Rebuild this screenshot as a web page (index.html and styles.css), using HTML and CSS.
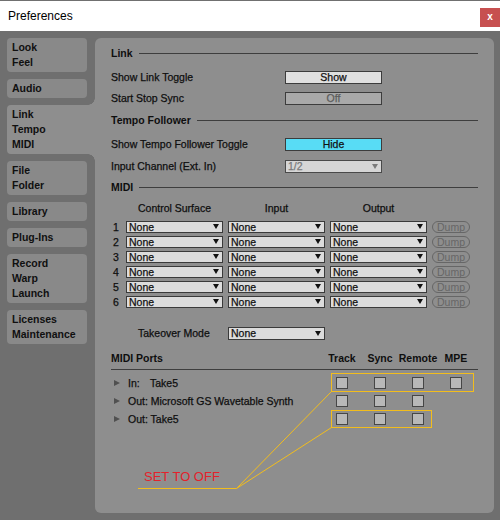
FILE: index.html
```html
<!DOCTYPE html>
<html>
<head>
<meta charset="utf-8">
<title>Preferences</title>
<link rel="stylesheet" href="styles.css">
</head>
<body>
<div class="window">
  <div class="titlebar">
    <span class="title">Preferences</span>
    <span class="close">x</span>
  </div>
  <div class="main">
    <nav class="sidebar">
      <div class="tab">Look<br>Feel</div>
      <div class="tab">Audio</div>
      <div class="tab active">Link<br>Tempo<br>MIDI</div>
      <div class="tab">File<br>Folder</div>
      <div class="tab">Library</div>
      <div class="tab">Plug-Ins</div>
      <div class="tab">Record<br>Warp<br>Launch</div>
      <div class="tab">Licenses<br>Maintenance</div>
    </nav>
    <section class="panel">
      <div class="head h-link">Link</div>
      <div class="row r24"><span class="label">Show Link Toggle</span><span class="btn">Show</span></div>
      <div class="row r18"><span class="label">Start Stop Sync</span><span class="btn off">Off</span></div>
      <div class="head h-tempo">Tempo Follower</div>
      <div class="row r22"><span class="label">Show Tempo Follower Toggle</span><span class="btn hide">Hide</span></div>
      <div class="row r22"><span class="label">Input Channel (Ext. In)</span><span class="select dim"><span>1/2</span><i class="arrow"></i></span></div>
      <div class="head h-midi">MIDI</div>

      <div class="midi-grid midi-head">
        <span></span><span>Control Surface</span><span>Input</span><span>Output</span><span></span>
      </div>
      <div class="midi-grid midi-row"><span class="num">1</span><span class="select sm"><span>None</span><i class="arrow"></i></span><span class="select sm"><span>None</span><i class="arrow"></i></span><span class="select sm"><span>None</span><i class="arrow"></i></span><span class="dump">Dump</span></div>
      <div class="midi-grid midi-row"><span class="num">2</span><span class="select sm"><span>None</span><i class="arrow"></i></span><span class="select sm"><span>None</span><i class="arrow"></i></span><span class="select sm"><span>None</span><i class="arrow"></i></span><span class="dump">Dump</span></div>
      <div class="midi-grid midi-row"><span class="num">3</span><span class="select sm"><span>None</span><i class="arrow"></i></span><span class="select sm"><span>None</span><i class="arrow"></i></span><span class="select sm"><span>None</span><i class="arrow"></i></span><span class="dump">Dump</span></div>
      <div class="midi-grid midi-row"><span class="num">4</span><span class="select sm"><span>None</span><i class="arrow"></i></span><span class="select sm"><span>None</span><i class="arrow"></i></span><span class="select sm"><span>None</span><i class="arrow"></i></span><span class="dump">Dump</span></div>
      <div class="midi-grid midi-row"><span class="num">5</span><span class="select sm"><span>None</span><i class="arrow"></i></span><span class="select sm"><span>None</span><i class="arrow"></i></span><span class="select sm"><span>None</span><i class="arrow"></i></span><span class="dump">Dump</span></div>
      <div class="midi-grid midi-row"><span class="num">6</span><span class="select sm"><span>None</span><i class="arrow"></i></span><span class="select sm"><span>None</span><i class="arrow"></i></span><span class="select sm"><span>None</span><i class="arrow"></i></span><span class="dump">Dump</span></div>

      <div class="takeover"><span class="tlabel">Takeover Mode</span><span class="select"><span>None</span><i class="arrow"></i></span></div>

      <div class="ports-grid ports-head">
        <span class="ports-title">MIDI Ports</span><span>Track</span><span>Sync</span><span>Remote</span><span>MPE</span>
      </div>
      <div class="ports-grid port-row">
        <span class="pname"><i class="tri"></i><span class="dir">In:</span>Take5</span>
        <span class="cb"></span><span class="cb"></span><span class="cb"></span><span class="cb"></span>
      </div>
      <div class="ports-grid port-row">
        <span class="pname"><i class="tri"></i>Out: Microsoft GS Wavetable Synth</span>
        <span class="cb"></span><span class="cb"></span><span class="cb"></span><span></span>
      </div>
      <div class="ports-grid port-row">
        <span class="pname"><i class="tri"></i>Out: Take5</span>
        <span class="cb"></span><span class="cb"></span><span class="cb"></span><span></span>
      </div>
    </section>
  </div>

  <svg class="annot" width="500" height="520" viewBox="0 0 500 520">
    <rect x="331.5" y="373.5" width="142" height="18" fill="none" stroke="#f2bd1d" stroke-width="1"/>
    <rect x="331.5" y="410.5" width="100" height="17" fill="none" stroke="#f2bd1d" stroke-width="1"/>
    <path d="M138 488.5 H236.5 L331.5 391.5 M236.5 488.5 L331.5 427.5" fill="none" stroke="#f2bd1d" stroke-width="1"/>
  </svg>
  <div class="note">SET TO OFF</div>
</div>
</body>
</html>
```

FILE: styles.css
```css
* { box-sizing: border-box; }

html, body {
  margin: 0;
  padding: 0;
}

body {
  width: 500px;
  height: 520px;
  overflow: hidden;
  font-family: "Liberation Sans", Arial, sans-serif;
  font-size: 10.5px;
  color: #0e0e0e;
}

.window {
  position: relative;
  width: 500px;
  height: 520px;
  background: #6f6f6f;
}

/* Title bar */
.titlebar {
  height: 31px;
  background: #ffffff;
  border-top: 1px solid #707070;
  display: flex;
  align-items: center;
  padding-left: 8px;
}

.title {
  font-size: 12px;
  color: #000;
}

.close {
  margin-left: auto;
  align-self: flex-start;
  margin-top: 7px;
  width: 20px;
  height: 19px;
  background: #c75050;
  color: #fff;
  font-weight: bold;
  font-size: 10px;
  line-height: 18px;
  text-align: center;
}

/* Main area */
.main {
  height: 489px;
  display: flex;
  padding: 7px 7px 7px 0;
}

.sidebar {
  width: 95px;
  flex: none;
  padding-left: 7px;
  display: flex;
  flex-direction: column;
  gap: 7px;
}

.tab {
  width: 80px;
  background: #898989;
  border-radius: 4px;
  padding: 2px 5px;
  line-height: 15px;
  font-weight: bold;
  font-size: 10.5px;
  color: #101010;
}

.tab.active {
  width: 88px;
  border-radius: 4px 0 0 4px;
  background: #8e8e8e;
  position: relative;
}

.tab.active::before,
.tab.active::after {
  content: "";
  position: absolute;
  right: 0;
  width: 7px;
  height: 7px;
}

.tab.active::before {
  top: -7px;
  background: radial-gradient(circle at 0 0, transparent 6.5px, #8e8e8e 7px);
}

.tab.active::after {
  top: 100%;
  background: radial-gradient(circle at 0 100%, transparent 6.5px, #8e8e8e 7px);
}

.panel {
  flex: 1;
  background: #8e8e8e;
  border-radius: 6px;
  padding: 3px 16px 0 16px;
}

.row .label,
.midi-head,
.num,
.tlabel,
.pname,
.select,
.btn {
  -webkit-text-stroke: 0.25px currentColor;
}

/* Section heads */
.head {
  display: flex;
  align-items: center;
  gap: 6px;
  font-weight: bold;
}

.head::after {
  content: "";
  flex: 1;
  height: 1px;
  background: #3e3e3e;
}

.h-link { height: 24px; }
.h-tempo { height: 26px; }
.h-midi { height: 20px; }

/* Label/control rows */
.row {
  display: flex;
  align-items: center;
}

.r24 { height: 24px; }
.r22 { height: 22px; }
.r18 { height: 18px; }

.label {
  width: 174px;
  flex: none;
}

.btn {
  width: 97px;
  height: 13px;
  border: 1px solid #3c3c3c;
  background: #e0e0e0;
  text-align: center;
  line-height: 11px;
  color: #111;
}

.btn.off {
  background: #a9a9a9;
  color: #5c5c5c;
}

.btn.hide {
  background: #58dcf5;
}

.select {
  width: 97px;
  height: 13px;
  border: 1px solid #3a3a3a;
  background: #dcdcdc;
  display: flex;
  align-items: center;
  justify-content: space-between;
  padding: 0 3px 0 2px;
  line-height: 11px;
  color: #111;
}

.select.sm {
  height: 12px;
  line-height: 10px;
}

.select.dim {
  color: #7a7a7a;
  background: #d6d6d6;
  border-color: #4a4a4a;
}

.arrow {
  width: 0;
  height: 0;
  border-left: 3px solid transparent;
  border-right: 3px solid transparent;
  border-top: 5px solid #111;
}

.select.dim .arrow {
  border-top-color: #7a7a7a;
}

/* MIDI grid */
.midi-grid {
  display: grid;
  grid-template-columns: 10px 97px 97px 97px 38px;
  column-gap: 5px;
  align-items: center;
}

.midi-head {
  height: 22px;
  text-align: center;
}

.midi-row {
  height: 15px;
}

.num {
  padding-left: 2px;
}

.dump {
  height: 12px;
  border: 1px solid #666;
  border-radius: 6px;
  text-align: center;
  line-height: 10px;
  color: #666;
}

/* Takeover */
.takeover {
  display: flex;
  align-items: center;
  height: 16px;
  margin-top: 16px;
  padding-left: 27px;
}

.tlabel {
  width: 90px;
  flex: none;
}

/* MIDI ports */
.ports-grid {
  display: grid;
  grid-template-columns: 212px repeat(4, 38px);
  align-items: center;
  justify-items: center;
}

.ports-head {
  width: 367px;
  height: 24px;
  margin-top: 5px;
  border-bottom: 1px solid #3e3e3e;
  font-weight: bold;
}

.ports-title {
  justify-self: start;
}

.port-row {
  height: 18px;
}

.ports-head + .port-row {
  margin-top: 4px;
}

.pname {
  justify-self: start;
  display: flex;
  align-items: center;
}

.tri {
  width: 0;
  height: 0;
  margin: 0 8px 0 3px;
  border-top: 3.5px solid transparent;
  border-bottom: 3.5px solid transparent;
  border-left: 6px solid #505050;
}

.dir {
  display: inline-block;
  width: 22px;
}

.cb {
  width: 12px;
  height: 12px;
  border: 1px solid #464646;
  background: #b8b8b8;
}

/* Annotation overlay */
.annot {
  position: absolute;
  left: 0;
  top: 0;
  pointer-events: none;
}

.note {
  position: absolute;
  left: 144px;
  top: 470px;
  font-family: "Liberation Sans", Arial, sans-serif;
  font-size: 13px;
  line-height: 13px;
  color: #e4212b;
}
```
